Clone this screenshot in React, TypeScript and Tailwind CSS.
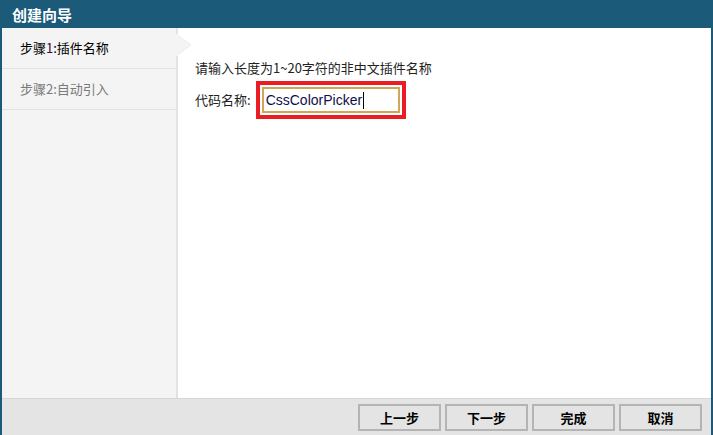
import React from "react";

const cjk = "font-['Microsoft_YaHei','Noto_Sans_CJK_SC',sans-serif]";

export default function App() {
  return (
    <div className={`w-[713px] h-[435px] flex flex-col bg-white overflow-hidden ${cjk}`}>
      {/* Title bar */}
      <div className="h-[28px] shrink-0 bg-[#1b5a78] flex items-center pl-[12px]">
        <span className="text-white text-[15px] font-bold leading-none">创建向导</span>
      </div>

      <div className="flex-1 flex flex-col border-x-2 border-[#1b5a78]">
        {/* Body */}
        <div className="flex-1 flex">
          {/* Steps */}
          <div className="relative w-[176px] shrink-0 bg-[#f4f4f4] border-r-2 border-[#e3e3e3]">
            <div className="h-[41px] flex items-center pl-[18px] border-b border-[#e2e2e2] text-[13px] text-black">
              步骤<span className="text-[#3a0a3a]">1</span>:插件名称
            </div>
            <div className="h-[41px] flex items-center pl-[18px] border-b border-[#e2e2e2] text-[13px] text-[#7a7a7a]">
              步骤2:自动引入
            </div>
            {/* pointer arrow */}
            <svg className="absolute left-[174px] top-[6px]" width="16" height="22" viewBox="0 0 16 22">
              <path d="M0 0 L15 11 L0 22 Z" fill="#f4f4f4" />
              <path d="M0 0 L15 11 L0 22" fill="none" stroke="#ececec" strokeWidth="1" />
              <rect x="0" y="0" width="2" height="22" fill="#f4f4f4" />
            </svg>
          </div>

          {/* Content */}
          <div className="flex-1 pl-[17px] pt-[31px] text-[13px] text-[#222]">
            <div className="leading-[18px]">请输入长度为1~20字符的非中文插件名称</div>
            <div className="flex items-center mt-[4px]">
              <span className="leading-[18px]">代码名称:</span>
              <div className="ml-[5px] border-[4px] border-[#ea1c24] p-[2px] w-[150px] h-[38px]">
                <div className="w-full h-full border-2 border-[#d3a657] bg-white flex items-center pl-[2px]">
                  <span className="font-['Liberation_Sans',Arial,sans-serif] text-[14px] text-[#10104a] leading-none">CssColorPicker</span>
                  <span className="w-px h-[17px] bg-black ml-px" />
                </div>
              </div>
            </div>
          </div>
        </div>

        {/* Footer */}
        <div className="h-[37px] shrink-0 bg-[#e4e4e4] border-t border-[#d6d6d6] flex items-start justify-end pt-[5px] pr-[9px] gap-[4px]">
          {["上一步", "下一步", "完成", "取消"].map((t) => (
            <button
              key={t}
              className="w-[83px] h-[27px] border-2 border-[#b4b4b4] bg-[#e4e4e4] text-[13px] font-bold text-black flex items-center justify-center"
            >
              {t}
            </button>
          ))}
        </div>
      </div>
    </div>
  );
}
